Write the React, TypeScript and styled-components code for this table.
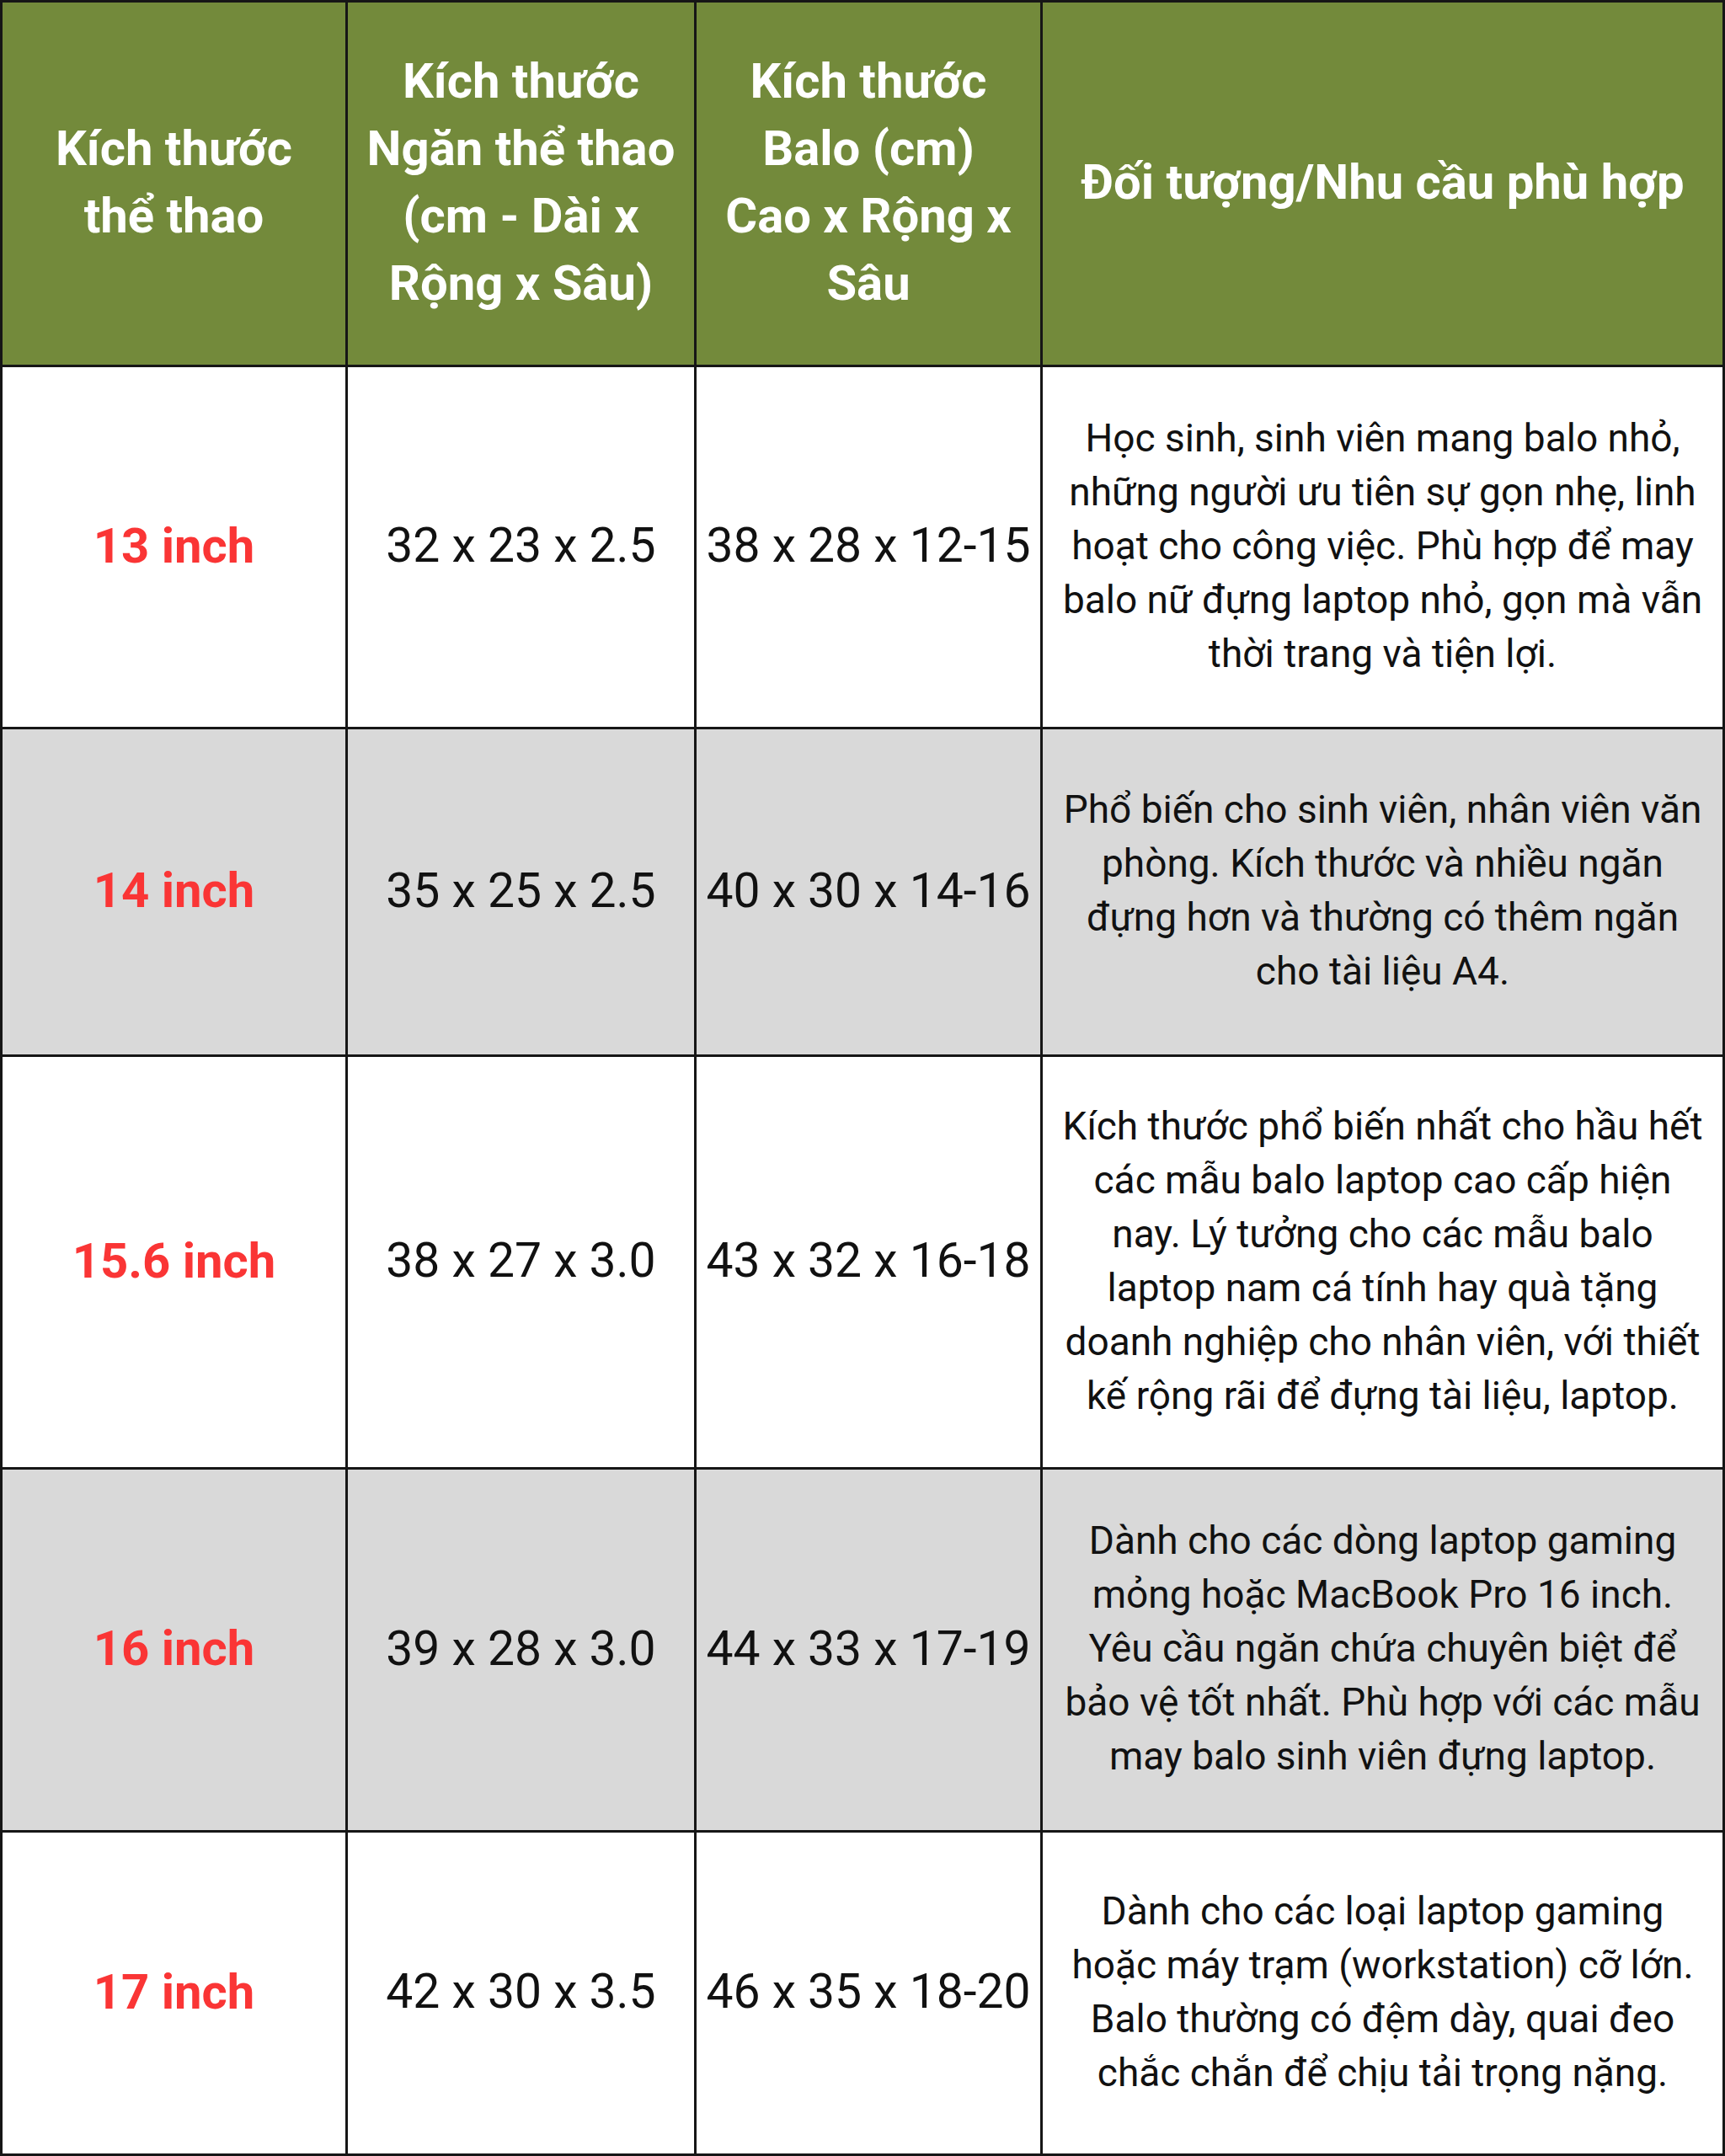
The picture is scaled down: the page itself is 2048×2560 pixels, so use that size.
import { createGlobalStyle, styled } from "styled-components";

const GlobalStyle = createGlobalStyle`
    html, body {
        margin: 0;
        padding: 0;
        background: #ffffff;
    }
    body {
        font-family: Roboto, "Noto Sans", "Liberation Sans", sans-serif;
        color: #111111;
    }
`;

const Table = styled.div`
    width: 2048px;
    height: 2560px;
    box-sizing: border-box;
    display: grid;
    grid-template-columns: 407px 411px 408px 1fr;
    grid-template-rows: 430px 427px 386px 487px 428px 1fr;
    gap: 3px;
    padding: 3px;
    background: #161616;
`;

const HeadCell = styled.div`
    background: #738a3b;
    color: #ffffff;
    font-weight: 700;
    font-size: 58px;
    line-height: 80px;
    display: flex;
    align-items: center;
    justify-content: center;
    text-align: center;
    white-space: pre-line;
    padding: 0 10px 4px;
`;

const Cell = styled.div<{ $shade: boolean }>`
    background: ${(p) => (p.$shade ? "#d9d9d9" : "#ffffff")};
    display: flex;
    align-items: center;
    justify-content: center;
    text-align: center;
    padding: 0 10px 4px;
`;

const SizeText = styled.span`
    color: #fa3535;
    font-weight: 700;
    font-size: 58px;
`;

const DimText = styled.span`
    font-size: 57px;
    font-weight: 400;
    white-space: nowrap;
`;

const NoteText = styled.p`
    margin: 0;
    font-size: 46px;
    line-height: 64px;
    white-space: pre-line;
`;

const headers = [
    "Kích thước\nthể thao",
    "Kích thước\nNgăn thể thao\n(cm - Dài x\nRộng x Sâu)",
    "Kích thước\nBalo (cm)\nCao x Rộng x\nSâu",
    "Đối tượng/Nhu cầu phù hợp",
];

const rows = [
    {
        size: "13 inch",
        pocket: "32 x 23 x 2.5",
        bag: "38 x 28 x 12-15",
        note: "Học sinh, sinh viên mang balo nhỏ,\nnhững người ưu tiên sự gọn nhẹ, linh\nhoạt cho công việc. Phù hợp để may\nbalo nữ đựng laptop nhỏ, gọn mà vẫn\nthời trang và tiện lợi.",
    },
    {
        size: "14 inch",
        pocket: "35 x 25 x 2.5",
        bag: "40 x 30 x 14-16",
        note: "Phổ biến cho sinh viên, nhân viên văn\nphòng. Kích thước và nhiều ngăn\nđựng hơn và thường có thêm ngăn\ncho tài liệu A4.",
    },
    {
        size: "15.6 inch",
        pocket: "38 x 27 x 3.0",
        bag: "43 x 32 x 16-18",
        note: "Kích thước phổ biến nhất cho hầu hết\ncác mẫu balo laptop cao cấp hiện\nnay. Lý tưởng cho các mẫu balo\nlaptop nam cá tính hay quà tặng\ndoanh nghiệp cho nhân viên, với thiết\nkế rộng rãi để đựng tài liệu, laptop.",
    },
    {
        size: "16 inch",
        pocket: "39 x 28 x 3.0",
        bag: "44 x 33 x 17-19",
        note: "Dành cho các dòng laptop gaming\nmỏng hoặc MacBook Pro 16 inch.\nYêu cầu ngăn chứa chuyên biệt để\nbảo vệ tốt nhất. Phù hợp với các mẫu\nmay balo sinh viên đựng laptop.",
    },
    {
        size: "17 inch",
        pocket: "42 x 30 x 3.5",
        bag: "46 x 35 x 18-20",
        note: "Dành cho các loại laptop gaming\nhoặc máy trạm (workstation) cỡ lớn.\nBalo thường có đệm dày, quai đeo\nchắc chắn để chịu tải trọng nặng.",
    },
];

export default function App() {
    return (
        <>
            <GlobalStyle />
            <Table>
                {headers.map((h) => (
                    <HeadCell key={h}>{h}</HeadCell>
                ))}
                {rows.map((r, i) => {
                    const shade = i % 2 === 1;
                    return [
                        <Cell key={r.size + "a"} $shade={shade}>
                            <SizeText>{r.size}</SizeText>
                        </Cell>,
                        <Cell key={r.size + "b"} $shade={shade}>
                            <DimText>{r.pocket}</DimText>
                        </Cell>,
                        <Cell key={r.size + "c"} $shade={shade}>
                            <DimText>{r.bag}</DimText>
                        </Cell>,
                        <Cell key={r.size + "d"} $shade={shade}>
                            <NoteText>{r.note}</NoteText>
                        </Cell>,
                    ];
                })}
            </Table>
        </>
    );
}
